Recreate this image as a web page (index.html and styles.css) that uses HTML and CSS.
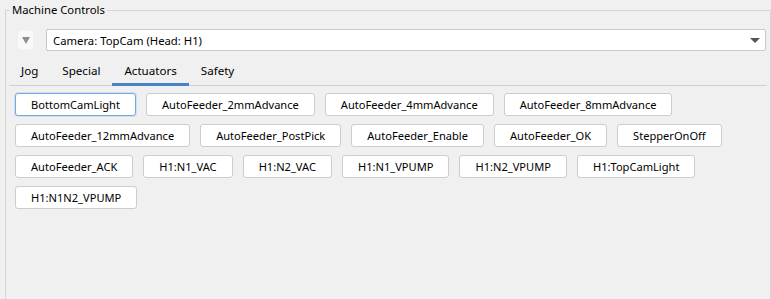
FILE: index.html
```html
<!DOCTYPE html>
<html lang="en">
<head>
    <meta charset="UTF-8">
    <meta name="viewport" content="width=device-width, initial-scale=1.0">
    <title>Machine Controls</title>
    <link rel="stylesheet" href="styles.css">
</head>
<body>
<fieldset class="group">
    <legend>Machine Controls</legend>
    <div class="camera-row">
        <button class="collapse">
            <svg width="8" height="7" viewBox="0 0 8 7"><path d="M0 0 H8 L4 7 Z" fill="#8f8f8f"/></svg>
        </button>
        <div class="combo">
            <span>Camera: TopCam (Head: H1)</span>
            <svg width="10" height="5" viewBox="0 0 10 5"><path d="M0 0 H10 L5 5 Z" fill="#555"/></svg>
        </div>
    </div>
    <div class="tabs">
        <div class="tab">Jog</div>
        <div class="tab">Special</div>
        <div class="tab active">Actuators</div>
        <div class="tab">Safety</div>
    </div>
    <div class="actuators">
        <button class="act focused">BottomCamLight</button>
        <button class="act">AutoFeeder_2mmAdvance</button>
        <button class="act">AutoFeeder_4mmAdvance</button>
        <button class="act">AutoFeeder_8mmAdvance</button>
        <button class="act">AutoFeeder_12mmAdvance</button>
        <button class="act">AutoFeeder_PostPick</button>
        <button class="act">AutoFeeder_Enable</button>
        <button class="act">AutoFeeder_OK</button>
        <button class="act">StepperOnOff</button>
        <button class="act">AutoFeeder_ACK</button>
        <button class="act">H1:N1_VAC</button>
        <button class="act">H1:N2_VAC</button>
        <button class="act">H1:N1_VPUMP</button>
        <button class="act">H1:N2_VPUMP</button>
        <button class="act">H1:TopCamLight</button>
        <button class="act">H1:N1N2_VPUMP</button>
    </div>
</fieldset>
</body>
</html>
```

FILE: styles.css
```css
* {
    box-sizing: border-box;
}

body {
    margin: 0;
    background: #f0f0f0;
    font-family: "Noto Sans", "Open Sans", sans-serif;
    font-size: 11.3px;
    color: #000;
    overflow: hidden;
}

.group {
    margin: 2px 0 0 5px;
    padding: 0;
    border: 1px solid #d5d5d5;
    height: 320px;
}

.group legend {
    margin-left: 4px;
    padding: 0 2px;
    line-height: 16px;
}

.camera-row {
    display: flex;
    align-items: center;
    margin: 11px 4px 0 12px;
    gap: 13px;
}

.collapse {
    width: 15px;
    height: 18px;
    padding: 0;
    border: none;
    border-radius: 2px;
    background: #f9f9f9;
    display: flex;
    align-items: center;
    justify-content: center;
}

.combo {
    flex: 1;
    height: 22px;
    background: #fff;
    border: 1px solid #c8c8c8;
    border-radius: 2px;
    display: flex;
    align-items: center;
    justify-content: space-between;
    padding: 0 5px 0 6px;
}

.tabs {
    display: flex;
    margin: 6px 3px 0 3px;
    border-bottom: 1px solid #d0d0d0;
    font-size: 11.6px;
}

.tab {
    padding: 0 12px;
    height: 29px;
    line-height: 27px;
    border-bottom: 3px solid transparent;
    margin-bottom: -1px;
}

.tab.active {
    border-bottom-color: #4a83c2;
}

.actuators {
    display: flex;
    flex-wrap: wrap;
    gap: 8px 10px;
    padding: 7px 9px 0 9px;
}

.act {
    height: 23px;
    padding: 0 15px;
    font: inherit;
    font-size: 11.1px;
    color: #000;
    background: #fff;
    border: 1px solid #cdcdcd;
    border-radius: 3px;
}

.act.focused {
    border-color: #7aa7e0;
    box-shadow: 0 0 0 1px #cfe0f5;
}
```
